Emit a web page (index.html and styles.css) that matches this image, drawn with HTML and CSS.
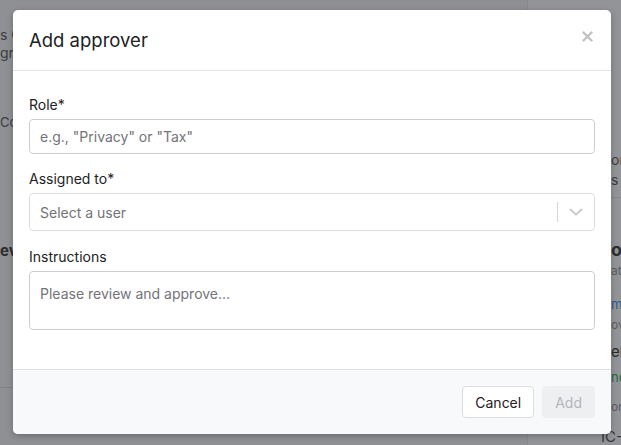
FILE: index.html
```html
<!DOCTYPE html>
<html lang="en">
<head>
    <meta charset="UTF-8">
    <meta name="viewport" content="width=device-width, initial-scale=1.0">
    <title>Add approver</title>
    <link rel="stylesheet" href="styles.css">
</head>
<body>
    <div class="page">
        <div class="main">
            <div class="intro">
                <div>s Co</div>
                <div>gro</div>
            </div>
            <div class="meta">Con</div>
            <div class="section-title">evi</div>
            <div class="main-rule"></div>
        </div>
        <div class="side">
            <div class="side-head">
                <div>or</div>
                <div>s -</div>
            </div>
            <div class="side-title">op</div>
            <div class="side-small">ate</div>
            <div class="side-link">m</div>
            <div class="side-small">ov</div>
            <div class="side-name">el</div>
            <div class="side-ok">nc</div>
            <div class="side-small">on</div>
            <div class="side-id">IC-</div>
        </div>
    </div>

    <div class="modal">
        <div class="modal-header">
            <h2>Add approver</h2>
            <button class="close" aria-label="Close">
                <svg width="11" height="11" viewBox="0 0 11 11">
                    <path d="M1.5 1.5l8 8M9.5 1.5l-8 8" stroke="#c2c2c4" stroke-width="2.4" stroke-linecap="round"/>
                </svg>
            </button>
        </div>
        <div class="modal-body">
            <div class="field">
                <label>Role*</label>
                <input class="input" type="text" placeholder='e.g., "Privacy" or "Tax"'>
            </div>
            <div class="field">
                <label>Assigned to*</label>
                <div class="select">
                    <span class="select-value">Select a user</span>
                    <span class="select-sep"></span>
                    <span class="select-arrow">
                        <svg width="14" height="8" viewBox="0 0 14 8">
                            <path d="M1.5 1.5l5.5 5 5.5-5" fill="none" stroke="#cbcbce" stroke-width="2" stroke-linecap="round" stroke-linejoin="round"/>
                        </svg>
                    </span>
                </div>
            </div>
            <div class="field">
                <label>Instructions</label>
                <textarea class="textarea" placeholder="Please review and approve..."></textarea>
            </div>
        </div>
        <div class="modal-footer">
            <button class="btn btn-cancel">Cancel</button>
            <button class="btn btn-add" disabled>Add</button>
        </div>
    </div>
</body>
</html>
```

FILE: styles.css
```css
body {
    margin: 0;
    width: 621px;
    height: 445px;
    overflow: hidden;
    font-family: Inter, "Noto Sans", sans-serif;
    background-color: #8f9094;
    color: #3b3c3f;
}
.page {
    display: flex;
    height: 445px;
}
.main {
    width: 527px;
    flex-shrink: 0;
    font-size: 14px;
    line-height: 18px;
    white-space: nowrap;
    border-right: 1px solid #88898d;
}
.intro {
    padding-top: 26px;
}
.meta {
    margin-top: 51px;
    font-size: 13px;
}
.section-title {
    margin-top: 111px;
    font-weight: 700;
    font-size: 15px;
    color: #2c2d30;
}
.main-rule {
    margin-top: 127px;
    border-top: 1px solid #7f8084;
}
.side {
    flex: 1;
    min-width: 0;
    overflow: hidden;
    background-color: #939498;
    padding-left: 83px;
    white-space: nowrap;
    font-size: 14px;
}
.side-head {
    padding-top: 150px;
    padding-bottom: 7px;
    line-height: 20px;
    border-bottom: 1px solid #86878b;
    margin-left: -83px;
    padding-left: 83px;
}
.side-title {
    margin-top: 40px;
    font-size: 18px;
    line-height: 24px;
    font-weight: 700;
    color: #2b2c2e;
}
.side-small {
    margin-top: 1px;
    font-size: 12px;
    line-height: 16px;
    color: #5c5d61;
}
.side-link {
    margin-top: 16px;
    font-size: 13px;
    line-height: 18px;
    color: #2b5c8f;
}
.side-link + .side-small {
    margin-top: 4px;
}
.side-name {
    margin-top: 9px;
    font-size: 15px;
    line-height: 20px;
    color: #28292b;
}
.side-ok {
    margin-top: 6px;
    font-size: 13px;
    line-height: 18px;
    color: #1f6b3b;
}
.side-ok + .side-small {
    margin-top: 13px;
}
.side-id {
    margin-top: 12px;
    margin-left: -10px;
    font-size: 15px;
    line-height: 20px;
    color: #37383b;
}
.modal {
    position: absolute;
    top: 10px;
    left: 13px;
    width: 598px;
    background-color: #fff;
    border-radius: 5px;
    box-shadow: 0 2px 6px rgba(0, 0, 0, 0.25);
    overflow: hidden;
}
.modal-header {
    display: flex;
    align-items: center;
    justify-content: space-between;
    height: 60px;
    padding: 0 16px;
    border-bottom: 1px solid #e4e4e6;
}
.modal-header h2 {
    margin: 0;
    font-size: 18.5px;
    font-weight: 400;
    color: #212224;
}
.close {
    background: none;
    border: none;
    padding: 0;
    margin: 0 2px 8px 0;
    display: flex;
    cursor: pointer;
}
.modal-body {
    padding: 24px 16px 23px;
}
.field {
    margin-bottom: 16px;
}
.field:first-child {
    margin-bottom: 15px;
}
.field label {
    display: block;
    font-size: 14px;
    line-height: 20px;
    color: #212224;
    margin-bottom: 4px;
}
.input, .textarea {
    display: block;
    box-sizing: border-box;
    width: 100%;
    border: 1px solid #cdcdd1;
    border-radius: 4px;
    font-family: inherit;
    font-size: 14px;
    color: #212224;
    padding: 0 10px;
}
.input {
    height: 35px;
}
.textarea {
    height: 59px;
    padding: 12px 10px;
    resize: none;
    line-height: 20px;
}
.input::placeholder, .textarea::placeholder {
    color: #737378;
}
.select {
    display: flex;
    align-items: center;
    height: 38px;
    box-sizing: border-box;
    border: 1px solid #dcdcdf;
    border-radius: 4px;
    padding-left: 10px;
    font-size: 14px;
}
.select-value {
    flex: 1;
    color: #737378;
}
.select-sep {
    width: 1px;
    height: 20px;
    background-color: #d6d6d9;
}
.select-arrow {
    display: flex;
    padding: 0 11px 0 11px;
}
.modal-footer {
    display: flex;
    justify-content: flex-end;
    gap: 8px;
    padding: 16px;
    background-color: #f8f9fa;
    border-top: 1px solid #e1e2e4;
}
.btn {
    height: 32px;
    padding: 0 12px;
    font-family: inherit;
    font-size: 14px;
    border-radius: 4px;
    border: 1px solid #dcdde0;
    cursor: pointer;
}
.btn-cancel {
    background-color: #fff;
    color: #1f2022;
}
.btn-add {
    background-color: #eeeff1;
    border-color: #eeeff1;
    color: #b4b5b9;
    cursor: default;
}
```
